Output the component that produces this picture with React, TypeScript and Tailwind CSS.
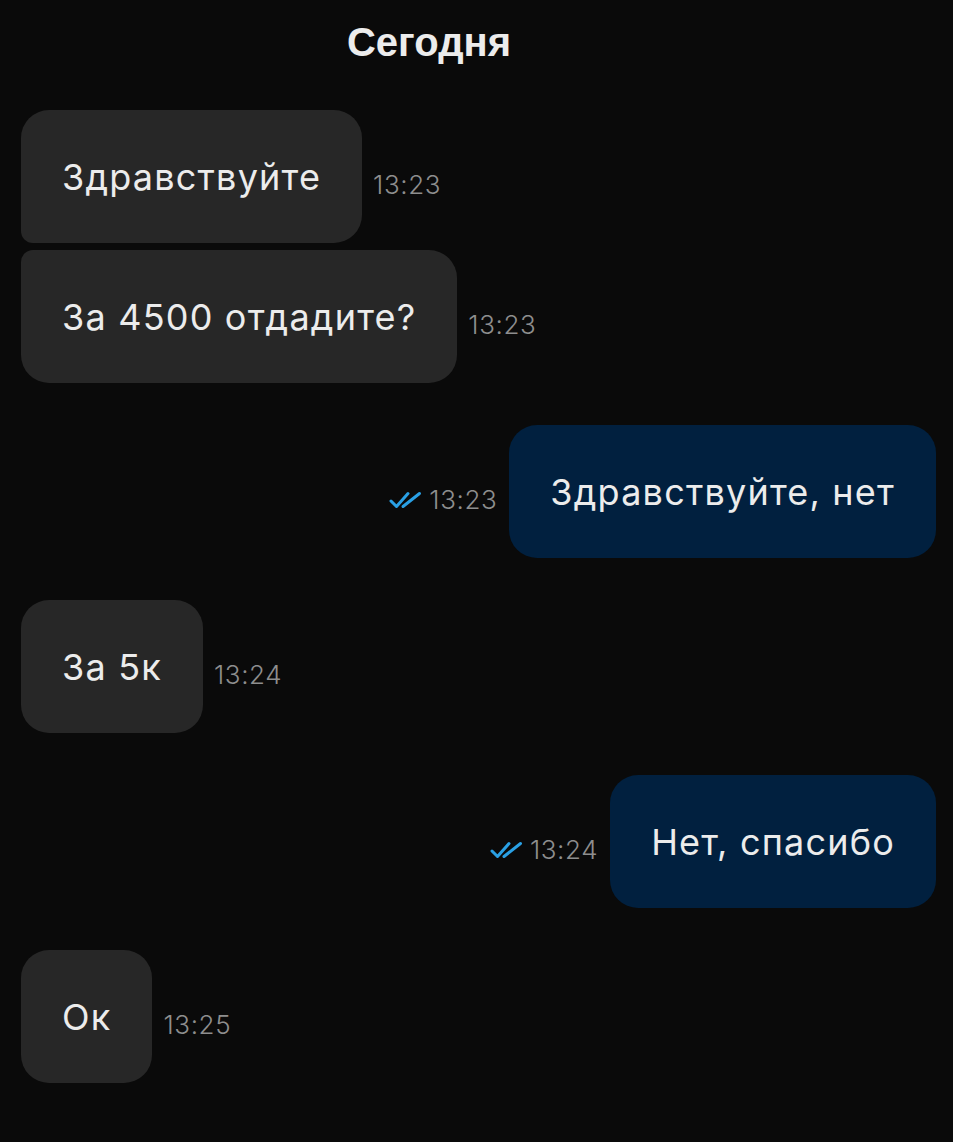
import React from 'react';

type Msg = {
  text: string;
  time: string;
  out?: boolean;
  shape: string;
};

// messages grouped by sender; grouped bubbles get tighter corners where they meet
const groups: Msg[][] = [
  [
    { text: 'Здравствуйте', time: '13:23', shape: 'rounded-[28px] rounded-bl-[12px]' },
    { text: 'За 4500 отдадите?', time: '13:23', shape: 'rounded-[28px] rounded-tl-[12px]' },
  ],
  [{ text: 'Здравствуйте, нет', time: '13:23', out: true, shape: 'rounded-[28px]' }],
  [{ text: 'За 5к', time: '13:24', shape: 'rounded-[28px]' }],
  [{ text: 'Нет, спасибо', time: '13:24', out: true, shape: 'rounded-[28px]' }],
  [{ text: 'Ок', time: '13:25', shape: 'rounded-[28px]' }],
];

function DoubleCheck() {
  return (
    <svg width="33" height="18" viewBox="0 0 33 18" fill="none" className="shrink-0">
      <path
        d="M2 10 L7.5 15.5 L19 2.5"
        stroke="#2aa0e4"
        strokeWidth="3"
        strokeLinecap="round"
        strokeLinejoin="round"
      />
      <path
        d="M14 15.5 L30.5 2.5"
        stroke="#2aa0e4"
        strokeWidth="3"
        strokeLinecap="round"
        strokeLinejoin="round"
      />
    </svg>
  );
}

function Time({ msg }: { msg: Msg }) {
  return (
    <div className="flex items-center gap-[7px] mt-4 shrink-0">
      {msg.out && <DoubleCheck />}
      <span className="text-[26px] leading-none font-light text-[#8e8e8e] tracking-[0.6px]">{msg.time}</span>
    </div>
  );
}

function Bubble({ msg }: { msg: Msg }) {
  const bubble = (
    <div
      className={`h-[133px] flex items-center px-[41px] text-[36px] leading-none text-[#ececec] tracking-[1.2px] whitespace-nowrap ${msg.shape} ${
        msg.out ? 'bg-[#01203f]' : 'bg-[#272727]'
      }`}
    >
      {msg.text}
    </div>
  );

  if (msg.out) {
    return (
      <div className="flex items-center justify-end gap-3">
        <Time msg={msg} />
        {bubble}
      </div>
    );
  }
  return (
    <div className="flex items-center gap-[11px]">
      {bubble}
      <Time msg={msg} />
    </div>
  );
}

export default function App() {
  return (
    <div
      className="w-[953px] h-[1142px] bg-[#0a0a0a] overflow-hidden"
      style={{ fontFamily: 'Inter, "Noto Sans", sans-serif' }}
    >
      <div
        className="pt-[22px] pr-[95px] text-center text-[40px] leading-none font-bold text-[#ececec]"
        style={{ fontFamily: '"Liberation Sans", Arial, sans-serif' }}
      >
        Сегодня
      </div>

      <div className="mt-[48px] pl-[21px] pr-[17px] flex flex-col gap-[42px]">
        {groups.map((group, gi) => (
          <div key={gi} className="flex flex-col gap-[7px]">
            {group.map((msg, mi) => (
              <Bubble key={mi} msg={msg} />
            ))}
          </div>
        ))}
      </div>
    </div>
  );
}
